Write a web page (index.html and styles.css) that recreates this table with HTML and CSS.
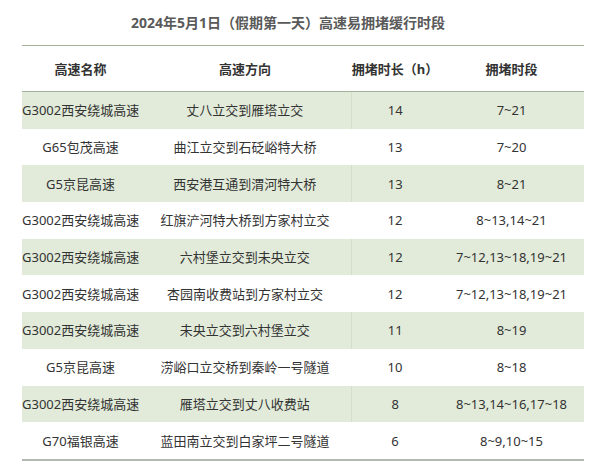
FILE: index.html
```html
<!DOCTYPE html>
<html lang="zh">
<head>
<meta charset="utf-8">
<link rel="stylesheet" href="styles.css">
</head>
<body>
<div class="page">
  <h1 class="title">2024年5月1日（假期第一天）高速易拥堵缓行时段</h1>
  <table class="tbl">
    <colgroup>
      <col class="c1"><col class="c2"><col class="c3"><col class="c4">
    </colgroup>
    <thead>
      <tr><th>高速名称</th><th>高速方向</th><th>拥堵时长（h）</th><th>拥堵时段</th></tr>
    </thead>
    <tbody>
      <tr class="g"><td>G3002西安绕城高速</td><td>丈八立交到雁塔立交</td><td class="d">14</td><td>7~21</td></tr>
      <tr><td>G65包茂高速</td><td>曲江立交到石砭峪特大桥</td><td class="d">13</td><td>7~20</td></tr>
      <tr class="g"><td>G5京昆高速</td><td>西安港互通到渭河特大桥</td><td class="d">13</td><td>8~21</td></tr>
      <tr><td>G3002西安绕城高速</td><td>红旗浐河特大桥到方家村立交</td><td class="d">12</td><td>8~13,14~21</td></tr>
      <tr class="g"><td>G3002西安绕城高速</td><td>六村堡立交到未央立交</td><td class="d">12</td><td>7~12,13~18,19~21</td></tr>
      <tr><td>G3002西安绕城高速</td><td>杏园南收费站到方家村立交</td><td class="d">12</td><td>7~12,13~18,19~21</td></tr>
      <tr class="g"><td>G3002西安绕城高速</td><td>未央立交到六村堡立交</td><td class="d">11</td><td>8~19</td></tr>
      <tr><td>G5京昆高速</td><td>涝峪口立交桥到秦岭一号隧道</td><td class="d">10</td><td>8~18</td></tr>
      <tr class="g"><td>G3002西安绕城高速</td><td>雁塔立交到丈八收费站</td><td class="d">8</td><td>8~13,14~16,17~18</td></tr>
      <tr><td>G70福银高速</td><td>蓝田南立交到白家坪二号隧道</td><td class="d">6</td><td>8~9,10~15</td></tr>
    </tbody>
  </table>
</div>
</body>
</html>
```
FILE: styles.css
```css
html, body {
  margin: 0;
  padding: 0;
  background: #ffffff;
}
body {
  font-family: "Noto Sans", "Noto Sans CJK SC", sans-serif;
  color: #333333;
}
.page {
  width: 597px;
  height: 467px;
  overflow: hidden;
  padding: 0 13px 0 22px;
  box-sizing: border-box;
}
.title {
  margin: 0;
  height: 45px;
  line-height: 46px;
  font-size: 14px;
  font-weight: bold;
  color: #5a5a5a;
  text-align: center;
  padding-right: 30px;
}
.tbl {
  width: 562px;
  border-collapse: collapse;
  table-layout: fixed;
  font-size: 13px;
  border-top: 1px solid #a3b39a;
  border-bottom: 2px solid #b4b8b2;
}
.c1 { width: 117px; }
.c2 { width: 212px; }
.c3 { width: 88px; }
.c4 { width: 145px; }
.tbl th {
  height: 45px;
  padding: 0;
  font-weight: bold;
  color: #333;
  text-align: center;
  border-bottom: 1px solid #a3b39a;
}
.tbl td {
  height: 36.7px;
  padding: 0;
  text-align: center;
  white-space: nowrap;
  line-height: 16px;
}
.tbl tr:nth-child(n) td:first-child {
  text-align: center;
}
.tbl tr.g td {
  background: #e2ebd9;
}
.tbl tr.g td.d {
  border-left: 1px solid #d3dfc9;
}
```
